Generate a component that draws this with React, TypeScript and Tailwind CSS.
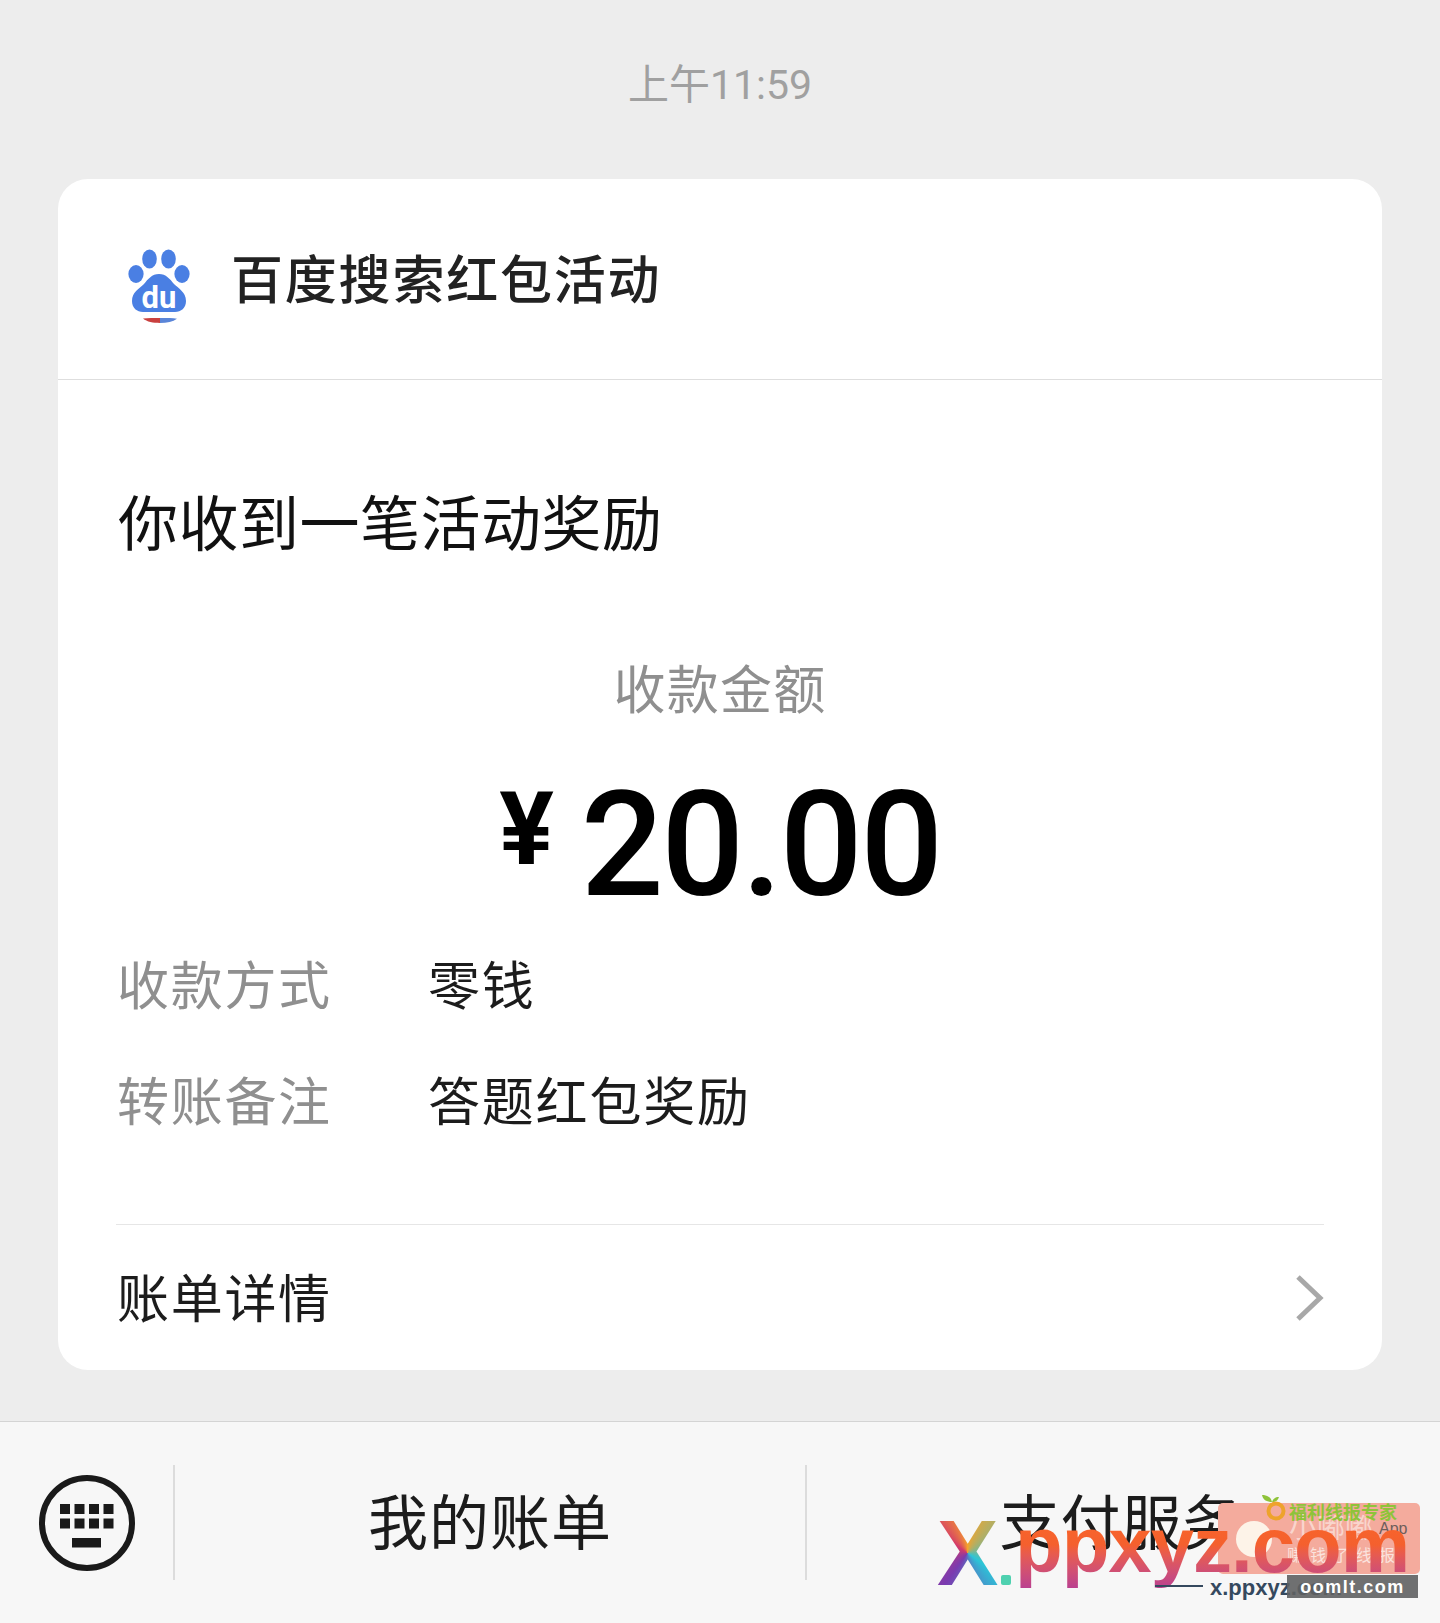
const CJK = 'font-["Noto_Sans_CJK_SC","Noto_Sans",sans-serif]';

function BaiduLogo() {
  return (
    <svg viewBox="0 0 120 120" className="w-[120px] h-[120px] shrink-0 mt-[4px]">
      <ellipse cx="49.5" cy="38" rx="7.3" ry="9.6" fill="#4a7fe3" />
      <ellipse cx="68.5" cy="38" rx="7.3" ry="9.6" fill="#4a7fe3" />
      <ellipse cx="36" cy="53" rx="7.6" ry="9" fill="#4a7fe3" />
      <ellipse cx="82" cy="53" rx="7.6" ry="9" fill="#4a7fe3" />
      <path
        d="M59 53c7 0 11 5 15 10 4 4 12 8 12 17 0 7-5 11-11 11H43c-6 0-11-4-11-11 0-9 7-12 12-17 4-5 8-10 15-10z"
        fill="#4a7fe3"
      />
      <text x="59" y="87" textAnchor="middle" fill="#fff" fontSize="31" fontWeight="700" fontFamily="Roboto, sans-serif">
        du
      </text>
      <path d="M43 97.500c5-.6 11-.6 17-.6v5c-7 0-13-1-17-4.400z" fill="#c9403f" />
      <path d="M60 96.900c7 0 13 0 17 .8-4 3-10 4.200-17 4.200z" fill="#5a85d8" />
    </svg>
  );
}

function KeyboardIcon() {
  return (
    <svg viewBox="0 0 96 96" className="w-[96px] h-[96px] shrink-0">
      <circle cx="48" cy="48" r="45" fill="none" stroke="#1a1a1a" strokeWidth="6" />
      {[21, 35.500, 50, 64.500].map(x => (
        <g key={x}>
          <rect x={x} y="29" width="10" height="10" fill="#1a1a1a" />
          <rect x={x} y="43.500" width="10" height="10" fill="#1a1a1a" />
        </g>
      ))}
      <rect x="33" y="63" width="29" height="9.500" fill="#1a1a1a" />
    </svg>
  );
}

function InfoRow({ label, value }: { label: string; value: string }) {
  return (
    <div className="flex items-center h-[116px] pl-[59px]">
      <span className="w-[311px] text-[52px] leading-none text-[#8f8f8f] tracking-[1.700px]">{label}</span>
      <span className="text-[52px] leading-none text-[#1c1c1c] tracking-[1.800px]">{value}</span>
    </div>
  );
}

function Watermark() {
  return (
    <div className="absolute left-[930px] top-[1485px] w-[490px] h-[125px] font-['Liberation_Sans',sans-serif]">
      {/* banner behind the site name */}
      <div className="absolute left-[288px] top-[18px] w-[202px] h-[71px] rounded-[5px] bg-[#f4ab9d] overflow-hidden">
        <span className={`absolute left-[71px] top-[9px] text-[28px] leading-none text-[#f9d5cd] ${CJK}`}>小嘟嘟</span>
        <span className="absolute left-[161px] top-[18px] text-[16px] leading-none text-[#6d5d5a]">App</span>
        <span className={`absolute left-[69px] top-[43px] text-[16px] leading-none text-[#fbe3dd] tracking-[7px] ${CJK}`}>赚钱了线报</span>
        <div className="absolute left-[18px] top-[18px] w-[36px] h-[36px] rounded-full bg-[#fdf3e8]" />
      </div>
      <svg viewBox="0 0 26 28" className="absolute left-[330px] top-[8px] w-[26px] h-[28px]">
        <path d="M2 2c5 0 9 2 10 7-5 0-9-2-10-7z" fill="#8fc33a" />
        <path d="M12 9c1-3 3-5 7-5-1 3-3 5-7 5z" fill="#8fc33a" />
        <circle cx="16" cy="18" r="7.500" fill="none" stroke="#eea32c" strokeWidth="4" />
      </svg>
      <span className={`absolute left-[359px] top-[17px] text-[18px] leading-none font-bold text-[#8fc33a] ${CJK}`}>福利线报专家</span>
      {/* logo X */}
      <span className="absolute left-[7px] top-[30px] text-[92px] leading-[76px] font-bold bg-[conic-gradient(#f6a32a,#2bc5d8_35%,#7a3bb0_60%,#d43a6a_85%,#f6a32a)] bg-clip-text text-transparent">
        X
      </span>
      <div className="absolute left-[71px] top-[90px] w-[10px] h-[10px] rounded-[2px] bg-[#4fd1b0]" />
      <span className="absolute left-[85px] top-[8px] text-[78px] leading-[104px] font-bold tracking-[-1px] bg-gradient-to-b from-[#ff6a25] via-[#f4602e] to-[#b0359c] bg-clip-text text-transparent">
        ppxyz.com
      </span>
      <div className="absolute left-[225px] top-[100px] w-[48px] h-[2px] bg-[#35495e]" />
      <span className="absolute left-[280px] top-[92px] text-[22px] leading-none font-bold text-[#35495e]">x.ppxyz.com</span>
      <div className="absolute left-[357px] top-[90px] w-[131px] h-[23px] bg-[#5f6062]/90 flex items-center justify-center text-[18px] leading-none font-bold text-white tracking-[1.500px]">
        oomlt.com
      </div>
    </div>
  );
}

export default function App() {
  return (
    <div className={`relative w-[1440px] h-[1623px] bg-[#ededed] flex flex-col overflow-hidden ${CJK}`}>
      <div className="h-[179px] shrink-0 flex justify-center pt-[58px]">
        <span className="text-[41px] leading-[54px] text-[#a0a0a0] font-['Roboto','Noto_Sans_CJK_SC',sans-serif]">上午11:59</span>
      </div>

      {/* Card */}
      <div className="mx-[58px] h-[1191px] shrink-0 bg-white rounded-[30px] flex flex-col">
        <div className="h-[201px] shrink-0 flex items-center pl-[42px] gap-[11px] border-b border-[#dedede]">
          <BaiduLogo />
          <span className="text-[52px] leading-none text-[#222] tracking-[1.800px] font-medium -mt-[4px]">百度搜索红包活动</span>
        </div>

        <div className="pl-[60px] pt-[105px] text-[60px] leading-[70px] text-[#111] tracking-[0.500px]">你收到一笔活动奖励</div>

        <div className="flex justify-center mt-[102px] text-[52px] leading-[60px] text-[#8f8f8f] tracking-[1.300px]">收款金额</div>

        <div className="flex justify-center items-start mt-[54px] h-[150px] text-black font-['Roboto',sans-serif] font-medium">
          <span className="text-[102px] leading-[100px] font-bold mr-[27px] mt-[8px]">¥</span>
          <span className="text-[146px] leading-[150px] tracking-[-2.500px]">20.00</span>
        </div>

        <div className="mt-[4px]">
          <InfoRow label="收款方式" value="零钱" />
          <InfoRow label="转账备注" value="答题红包奖励" />
        </div>

        <div className="mx-[58px] mt-[67px] border-t border-[#e6e6e6] flex-1 flex items-center justify-between pl-[1px]">
          <span className="text-[52px] leading-none text-[#1c1c1c] tracking-[1.700px] -mt-[3px]">账单详情</span>
          <svg viewBox="0 0 30 48" className="w-[30px] h-[48px]">
            <path d="M4 3l22 21L4 45" fill="none" stroke="#a8a8a8" strokeWidth="5" />
          </svg>
        </div>
      </div>

      {/* Bottom bar */}
      <div className="mt-[51px] flex-1 bg-[#f7f7f7] border-t border-[#d4d4d4] flex items-center pl-[39px]">
        <KeyboardIcon />
        <div className="ml-[38px] w-[2px] h-[115px] bg-[#dcdcdc] shrink-0" />
        <div className="w-[630px] shrink-0 flex justify-center text-[60px] leading-none text-[#1c1c1c] tracking-[1px] -mt-[8px]">我的账单</div>
        <div className="w-[2px] h-[115px] bg-[#dcdcdc] shrink-0" />
        <div className="flex-1 flex justify-center text-[60px] leading-none text-[#1c1c1c] tracking-[1px] pr-[4px] -mt-[8px]">支付服务</div>
      </div>

      <Watermark />
    </div>
  );
}
